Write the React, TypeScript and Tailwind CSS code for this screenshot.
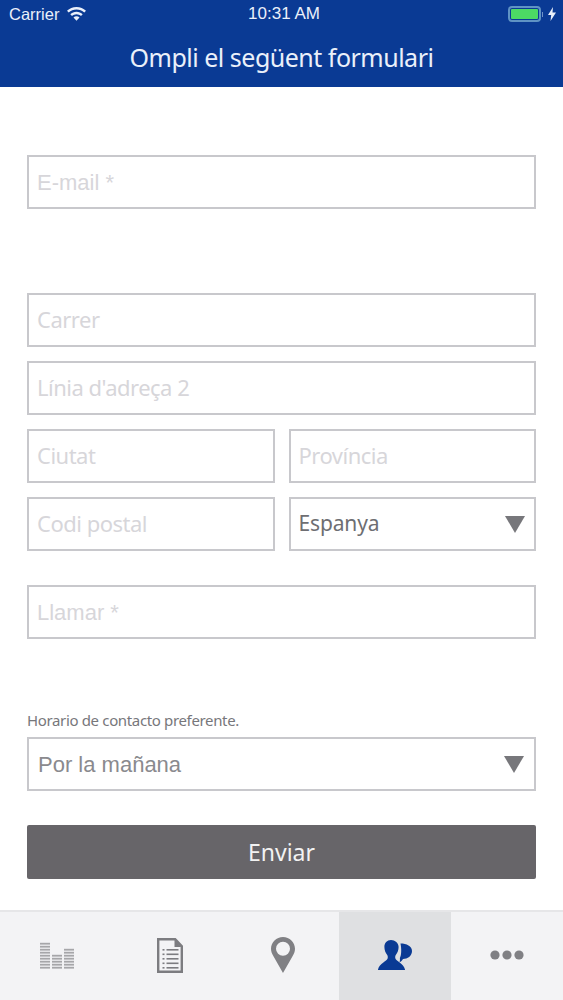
const Field = ({ placeholder, className = "pb-[2px] font-['Noto_Sans',sans-serif] tracking-[-0.5px]" }: { placeholder: string; className?: string }) => (
  <input
    placeholder={placeholder}
    className={`h-[54px] w-full min-w-0 border-2 border-[#c8c8cc] bg-white pl-[8px] pr-2 text-[22px] outline-none placeholder:text-[#d7d6da] ${className}`}
  />
)

const Arrow = () => (
  <svg width="20" height="17" viewBox="0 0 20 17" className="shrink-0">
    <path d="M0 0h20L10 17z" fill="#77777b" />
  </svg>
)

const Select = ({ value, className = '' }: { value: string; className?: string }) => (
  <div className={`flex h-[54px] w-full items-center justify-between border-2 border-[#c8c8cc] bg-white pl-[8px] pr-[9px] ${className}`}>
    <span>{value}</span>
    <Arrow />
  </div>
)

const BarsIcon = () => {
  const columns = [
    { x: 0, rows: 9 },
    { x: 12, rows: 5 },
    { x: 24, rows: 7 },
  ]
  return (
    <svg width="34" height="27" viewBox="0 0 34 27">
      {columns.map((col) =>
        Array.from({ length: col.rows }).map((_, i) => (
          <rect key={`${col.x}-${i}`} x={col.x} y={24.8 - i * 3} width="10" height="1.8" fill="#a6a6a9" />
        )),
      )}
    </svg>
  )
}

const DocIcon = () => (
  <svg width="26" height="35" viewBox="0 0 26 35">
    <path d="M1.2 1.2h17l6.600 7v25.600H1.2z" fill="none" stroke="#7c7c80" strokeWidth="2.4" />
    <path d="M17.500 1.500v7.500h7z" fill="#7c7c80" />
    {[11, 15.500, 20, 24.500, 29].map((y) => (
      <g key={y} fill="#7c7c80">
        <rect x="5.500" y={y} width="2" height="1.600" />
        <rect x="9.500" y={y} width="12" height="1.600" />
      </g>
    ))}
  </svg>
)

const PinIcon = () => (
  <svg width="24" height="36" viewBox="0 0 24 36">
    <path
      fillRule="evenodd"
      d="M12 0C5.400 0 0 5.300 0 11.800c0 3 1 5.200 2.600 7.600L12 36l9.400-16.600c1.600-2.400 2.600-4.600 2.600-7.600C24 5.300 18.600 0 12 0zm0 4.800a7 7 0 1 1 0 14 7 7 0 0 1 0-14z"
      fill="#808084"
    />
  </svg>
)

const ContactIcon = () => (
  <svg width="34" height="30" viewBox="0 0 34 30">
    <path
      d="M13 0C9 0 6.400 3 6.400 7c0 3.200 1.200 6 2.800 8 .7 1 .7 2.400.4 3.600C8.800 21.300 1.500 23.500 0 29.500V30h27v-.5c-1.500-6-8.800-8.200-9.600-10.900-.3-1.200-.3-2.600.4-3.600 1.600-2 2.800-4.800 2.800-8C20.600 3 17 0 13 0z"
      fill="#0a3a94"
    />
    <path
      d="M22.500 3.500C28.500 3.500 34 6 34 11s-4.500 8-9 8c-.8 1.500-2 2.600-3.500 3.400.5-1.500.6-3 .4-4.400 1.500-2.700 1.800-8.300.6-14.500z"
      fill="#0a3a94"
    />
  </svg>
)

const DotsIcon = () => (
  <svg width="34" height="10" viewBox="0 0 34 10">
    <circle cx="5" cy="5" r="4.600" fill="#808084" />
    <circle cx="17" cy="5" r="4.600" fill="#808084" />
    <circle cx="29" cy="5" r="4.600" fill="#808084" />
  </svg>
)

const WifiIcon = () => (
  <svg width="19" height="14" viewBox="0 0 19 14" fill="#eaf0fa">
    <path d="M9.500 0C5.800 0 2.500 1.400 0 3.800l1.700 1.800C3.800 3.600 6.500 2.400 9.500 2.400s5.700 1.200 7.800 3.200L19 3.800C16.500 1.400 13.200 0 9.500 0z" />
    <path d="M9.500 4.700c-2.400 0-4.600 1-6.200 2.500L5 9c1.200-1.100 2.800-1.800 4.500-1.800S12.800 7.900 14 9l1.700-1.800c-1.600-1.500-3.800-2.500-6.200-2.500z" />
    <path d="M9.500 9.200c-1.200 0-2.200.4-3 1.200l3 3.400 3-3.400c-.8-.8-1.800-1.200-3-1.200z" />
  </svg>
)

const BatteryIcon = () => (
  <div className="flex items-center gap-[1px]">
    <div className="h-[16px] w-[33px] rounded-[4px] border-2 border-[#5f93c4] p-[1px]">
      <div className="h-full w-full rounded-[1px] bg-[#4cd964]" />
    </div>
    <div className="h-[5px] w-[1px] bg-[#6f93c8]" />
  </div>
)

const Bolt = () => (
  <svg width="8" height="14" viewBox="0 0 8 14" fill="#eaf0fa">
    <path d="M5 0L0 8h3.200L2.500 14 8 5.500H4.500z" />
  </svg>
)

const tabs = [
  { icon: <BarsIcon />, active: false },
  { icon: <DocIcon />, active: false },
  { icon: <PinIcon />, active: false },
  { icon: <ContactIcon />, active: true },
  { icon: <DotsIcon />, active: false },
]

export default function App() {
  return (
    <div className="flex h-[1000px] w-[563px] flex-col overflow-hidden bg-white">
      {/* Header */}
      <div className="h-[87px] shrink-0 bg-[#0a3a94] text-[#eaf0fa]">
        <div className="relative flex h-[28px] items-center justify-between px-[7px] font-['Liberation_Sans',sans-serif] text-[16.500px]">
          <div className="flex items-center gap-[8px] pl-[2px]">
            <span>Carrier</span>
            <WifiIcon />
          </div>
          <span className="absolute left-[5px] right-0 text-center text-[17px]">10:31 AM</span>
          <div className="flex items-center gap-[5px]">
            <BatteryIcon />
            <Bolt />
          </div>
        </div>
        <div className="mt-[10px] text-center font-['Noto_Sans',sans-serif] text-[25px] leading-[38px] tracking-[-0.5px]">
          Ompli el següent formulari
        </div>
      </div>

      {/* Form */}
      <div className="flex flex-1 flex-col px-[27px] pt-[68px]">
        <Field placeholder="E-mail *" className="pt-[2px] font-['Liberation_Sans',sans-serif]" />

        <div className="mt-[84px] flex flex-col gap-[14px]">
          <Field placeholder="Carrer" />
          <Field placeholder="Línia d'adreça 2" />
          <div className="grid grid-cols-2 gap-[14px]">
            <Field placeholder="Ciutat" />
            <Field placeholder="Província" />
          </div>
          <div className="grid grid-cols-2 gap-[14px]">
            <Field placeholder="Codi postal" />
            <Select value="Espanya" className="font-['Noto_Sans',sans-serif] text-[21px] tracking-[-0.15px] text-[#6e6e72]" />
          </div>
        </div>

        <Field placeholder="Llamar *" className="mt-[34px] pt-[2px] font-['Liberation_Sans',sans-serif]" />

        <div className="mt-[70px] font-['Noto_Sans',sans-serif] text-[15px] leading-[22px] tracking-[-0.35px] text-[#77777b]">
          Horario de contacto preferente.
        </div>
        <Select value="Por la mañana" className="mt-[6px] pl-[9px] pr-[10px] pt-[1px] font-['Liberation_Sans',sans-serif] text-[22px] text-[#8a8a8e]" />

        <button className="mt-[34px] h-[54px] w-full rounded-[2px] bg-[#676569] font-['Noto_Sans',sans-serif] text-[23px] text-[#f2f2f2]">
          Enviar
        </button>
      </div>

      {/* Tab bar */}
      <div className="grid h-[90px] shrink-0 grid-cols-[113px_113px_113px_112px_112px] border-t-2 border-[#e6e6e8] bg-[#f3f3f5]">
        {tabs.map((tab, i) => (
          <div key={i} className={`flex items-center justify-center pb-[2px] ${tab.active ? 'bg-[#dfe0e2]' : ''}`}>
            {tab.icon}
          </div>
        ))}
      </div>
    </div>
  )
}
